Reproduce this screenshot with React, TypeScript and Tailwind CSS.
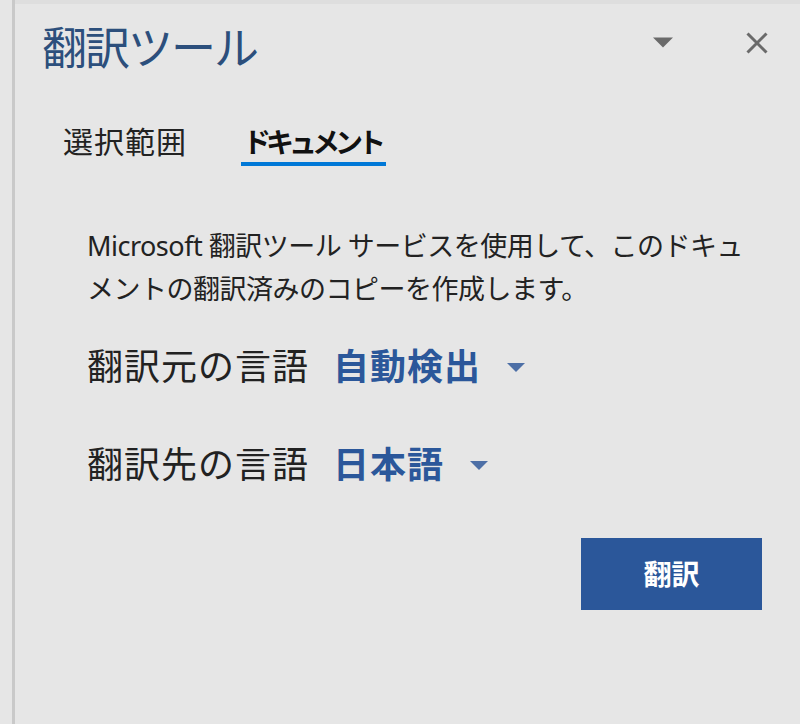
import { useState } from 'react';

const font = "font-['Noto_Sans','Noto_Sans_CJK_JP',sans-serif]";

function Caret({ className }: { className: string }) {
  return (
    <svg viewBox="0 0 20 10" className={className} fill="currentColor">
      <path d="M0 0h20L10 10z" />
    </svg>
  );
}

function LangRow({ label, value }: { label: string; value: string }) {
  return (
    <div className="flex items-center h-[40px]">
      <span className="text-[36px] leading-none tracking-[1px] text-[#222]">{label}</span>
      <span className="ml-[24px] text-[36px] leading-none font-bold tracking-[1px] text-[#2b579a]">{value}</span>
      <Caret className="ml-[26px] w-[18px] h-[9px] text-[#4d6fa6]" />
    </div>
  );
}

export default function App() {
  const [tab, setTab] = useState<'selection' | 'document'>('document');

  return (
    <div className={`w-[800px] h-[724px] bg-[#e6e6e6] flex ${font}`}>
      {/* panel edge */}
      <div className="ml-[12px] w-[3px] h-full bg-[#c9c9c9]" />

      <div className="flex-1 flex flex-col border-t-[4px] border-[#dedede] pl-[27px]">
        {/* Header */}
        <div className="mt-[22px] flex items-start">
          <h1 className="text-[45px] leading-[44px] tracking-[-2px] text-[#2c4f7c]">翻訳ツール</h1>
          <div className="flex-1" />
          <button className="mt-[11px] w-[20px] h-[11px] text-[#6a6a6a]">
            <Caret className="w-[20px] h-[11px]" />
          </button>
          <button className="ml-[73px] mt-[6px] mr-[32px] text-[#6a6a6a]">
            <svg viewBox="0 0 22 22" className="w-[22px] h-[22px]" stroke="currentColor" strokeWidth="3">
              <path d="M1.5 1.5l19 19M20.5 1.5l-19 19" />
            </svg>
          </button>
        </div>

        {/* Tabs */}
        <div className="mt-[57px] ml-[21px] flex items-start">
          <button
            onClick={() => setTab('selection')}
            className={`text-[30px] leading-[30px] tracking-[1px] pb-[5px] border-b-[4px] ${
              tab === 'selection' ? 'border-[#0078d7] font-bold text-[#111]' : 'border-transparent text-[#222]'
            }`}
          >
            選択範囲
          </button>
          <button
            onClick={() => setTab('document')}
            className={`ml-[54px] pl-[2px] text-[28px] leading-[30px] tracking-[-5px] pr-[5px] pb-[5px] border-b-[4px] ${
              tab === 'document' ? 'border-[#0078d7] font-bold text-[#111]' : 'border-transparent text-[#222]'
            }`}
          >
            ドキュメント
          </button>
        </div>

        {/* Body */}
        <div className="ml-[45px] mt-[58px]">
          <p className="text-[27px] leading-[43px] tracking-[-0.5px] text-[#222]">
            Microsoft 翻訳ツール サービスを使用して、このドキュ
            <br />
            メントの翻訳済みのコピーを作成します。
          </p>

          <div className="mt-[37px]">
            <LangRow label="翻訳元の言語" value="自動検出" />
          </div>
          <div className="mt-[58px]">
            <LangRow label="翻訳先の言語" value="日本語" />
          </div>
        </div>

        <div className="mt-[53px] flex justify-end pr-[38px]">
          <button className="w-[181px] h-[72px] bg-[#2b579a] text-white text-[28px] font-bold">翻訳</button>
        </div>
      </div>
    </div>
  );
}
